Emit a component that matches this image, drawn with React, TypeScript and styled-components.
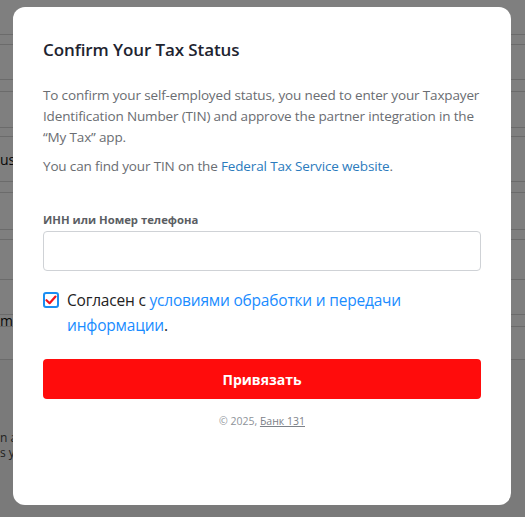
import styled, { createGlobalStyle } from 'styled-components';

const GlobalStyle = createGlobalStyle`
    html, body {
        margin: 0;
        padding: 0;
        background: #f4f4f4;
        font-family: 'Open Sans', 'Noto Sans', Arial, sans-serif;
    }
`;

// background page rows, only the left strip stays visible
const rowHeights = [35, 10, 35, 12, 36, 9, 45, 11, 37, 10, 40, 35, 12, 33];
const rowTexts: Record<number, string> = { 6: 'us', 12: 'm' };

const Page = styled.div`
    width: 525px;
    height: 517px;
    overflow: hidden;
`;

const BgRow = styled.div<{ $h: number }>`
    height: ${(p) => p.$h - 1}px;
    border-bottom: 1px solid #d6d6d6;
    background: #ffffff;
    display: flex;
    align-items: center;
    font-size: 14px;
    color: #111;
    white-space: nowrap;
`;

const BgText = styled.div`
    margin-top: 70px;
    display: flex;
    flex-direction: column;
    font-size: 12px;
    line-height: 15px;
    color: #444;
    white-space: nowrap;
`;

const Overlay = styled.div`
    position: fixed;
    inset: 0;
    background: rgba(0, 0, 0, 0.5);
    display: flex;
    align-items: flex-start;
    padding: 7px 0 0 13px;
`;

const Modal = styled.div`
    width: 498px;
    height: 498px;
    box-sizing: border-box;
    background: #fff;
    border-radius: 12px;
    padding: 30px 30px 0;
    display: flex;
    flex-direction: column;
`;

const Title = styled.h2`
    margin: 0;
    font-size: 17px;
    line-height: 26px;
    font-weight: 600;
    color: #1e2430;
    letter-spacing: -0.1px;
`;

const Text = styled.p<{ $gap?: number }>`
    margin: ${(p) => p.$gap ?? 0}px 0 0;
    font-size: 13.5px;
    line-height: 21px;
    color: #6a6d72;
    letter-spacing: -0.15px;
`;

const BlueLink = styled.a`
    color: #2b7bbd;
    text-decoration: none;
`;

const Label = styled.label`
    margin-top: 35px;
    font-size: 11.3px;
    line-height: 16px;
    font-weight: 700;
    color: #5b5e63;
`;

const Input = styled.input`
    margin-top: 3px;
    height: 40px;
    box-sizing: border-box;
    border: 1px solid #cfd2d6;
    border-radius: 4px;
    padding: 0 12px;
    font: inherit;
    outline: none;
`;

const Agree = styled.div`
    margin-top: 17px;
    display: flex;
    gap: 8px;
    align-items: flex-start;
`;

const Box = styled.span`
    flex: none;
    margin-top: 4px;
    width: 16px;
    height: 16px;
    box-sizing: border-box;
    border: 2px solid #1b8ef2;
    border-radius: 3px;
    display: flex;
    align-items: center;
    justify-content: center;
`;

const AgreeText = styled.div`
    font-size: 15.5px;
    line-height: 25px;
    color: #222;
    letter-spacing: -0.2px;
`;

const AgreeLink = styled.a`
    color: #1a8cff;
    text-decoration: none;
`;

const Submit = styled.button`
    margin-top: 21px;
    height: 40px;
    border: none;
    border-radius: 4px;
    background: #ff0c0c;
    color: #fff;
    font: inherit;
    font-size: 14px;
    font-weight: 700;
    cursor: pointer;
`;

const Footer = styled.div`
    margin-top: 14px;
    text-align: center;
    font-size: 10.5px;
    line-height: 16px;
    color: #8e9399;

    a {
        color: #7c8188;
        text-decoration: underline;
    }
`;

const Check = () => (
    <svg width="12" height="10" viewBox="0 0 12 10" fill="none">
        <path d="M1.5 5.2L4.6 8.2L10.5 1.6" stroke="#f0141e" strokeWidth="2.2" strokeLinecap="round" strokeLinejoin="round" />
    </svg>
);

export default function App() {
    return (
        <>
            <GlobalStyle />
            <Page>
                {rowHeights.map((h, i) => (
                    // eslint-disable-next-line react/no-array-index-key
                    <BgRow key={i} $h={h}>
                        {rowTexts[i] ?? ''}
                    </BgRow>
                ))}
                <BgText>
                    <span>n a</span>
                    <span>s y</span>
                </BgText>
            </Page>
            <Overlay>
                <Modal>
                    <Title>Confirm Your Tax Status</Title>
                    <Text $gap={22}>
                        To confirm your self-employed status, you need to enter your Taxpayer Identification Number
                        (TIN) and approve the partner integration in the “My Tax” app.
                    </Text>
                    <Text $gap={8}>
                        You can find your TIN on the <BlueLink href="#">Federal Tax Service website</BlueLink>.
                    </Text>
                    <Label htmlFor="inn">ИНН или Номер телефона</Label>
                    <Input id="inn" type="text" />
                    <Agree>
                        <Box>
                            <Check />
                        </Box>
                        <AgreeText>
                            Согласен с <AgreeLink href="#">условиями обработки и передачи информации</AgreeLink>.
                        </AgreeText>
                    </Agree>
                    <Submit type="button">Привязать</Submit>
                    <Footer>
                        © 2025, <a href="#">Банк 131</a>
                    </Footer>
                </Modal>
            </Overlay>
        </>
    );
}
